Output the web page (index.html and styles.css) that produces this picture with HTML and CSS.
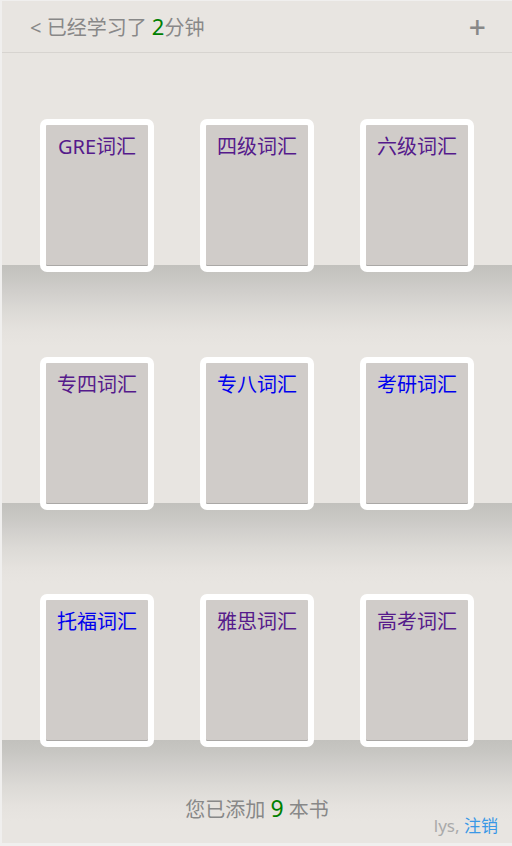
FILE: index.html
```html
<!DOCTYPE html>
<html lang="zh-CN">
<head>
<meta charset="utf-8">
<title>书架</title>
<link rel="stylesheet" href="styles.css">
</head>
<body>
<div class="app">
  <header class="topbar">
    <div class="study">&lt; 已经学习了 <span class="num">2</span>分钟</div>
    <div class="plus">+</div>
  </header>
  <main class="shelves">
    <section class="shelf first">
      <a class="book visited">GRE词汇</a>
      <a class="book visited">四级词汇</a>
      <a class="book visited">六级词汇</a>
    </section>
    <section class="shelf">
      <a class="book visited">专四词汇</a>
      <a class="book">专八词汇</a>
      <a class="book">考研词汇</a>
    </section>
    <section class="shelf">
      <a class="book">托福词汇</a>
      <a class="book visited">雅思词汇</a>
      <a class="book visited">高考词汇</a>
    </section>
  </main>
  <footer class="footer">
    <div class="count">您已添加 <span class="num big">9</span> 本书</div>
    <div class="user">lys, <a class="logout">注销</a></div>
  </footer>
</div>
</body>
</html>
```
FILE: styles.css
```css
html, body {
  margin: 0;
  padding: 0;
  background: #f0efee;
}
body {
  font-family: "Noto Sans", "Noto Sans CJK SC", sans-serif;
}
.app {
  margin: 1px 0 0 2px;
  width: 510px;
  height: 842px;
  background: #e8e5e1;
  display: flex;
  flex-direction: column;
  overflow: hidden;
}
.topbar {
  height: 51px;
  border-bottom: 1px solid #d7d4d0;
  display: flex;
  align-items: center;
  justify-content: space-between;
  padding: 0 26px 0 28px;
  color: #888;
  font-size: 20px;
}
.study { line-height: 1; }
.num {
  color: #008000;
  font-size: 22px;
}
.plus {
  font-size: 30px;
  font-weight: 500;
  color: #888;
  line-height: 1;
}
.shelves {
  display: flex;
  flex-direction: column;
}
.shelf {
  height: 237.5px;
  box-sizing: border-box;
  padding: 66px 16px 0 15px;
  display: grid;
  grid-template-columns: repeat(3, 160px);
  justify-items: center;
  align-items: start;
  background: linear-gradient(to bottom,
    #d0cecb 0, #dcdad6 20px, #e5e2de 40px, #e8e5e1 55px, #e8e5e1 212px,
    #c2c1bd 212px, #c8c7c3 225px, #d0cecb 237.5px);
}
.shelf.first {
  background: linear-gradient(to bottom,
    #e8e5e1 0, #e8e5e1 212px,
    #c2c1bd 212px, #c8c7c3 225px, #d0cecb 237.5px);
}
.book {
  width: 114px;
  height: 153px;
  box-sizing: border-box;
  border: 6px solid #fff;
  border-radius: 7px;
  background: #d0ccc9;
  box-shadow: inset 0 -1px 0 #aaa8a6;
  text-align: center;
  padding-top: 7px;
  font-size: 20px;
  line-height: 30px;
  color: #0000ee;
  text-decoration: none;
}
.book.visited { color: #551a8b; }
.footer {
  flex: 1;
  position: relative;
  background: linear-gradient(to bottom,
    #d0cecb 0, #dcdad6 20px, #e5e2de 40px, #e8e5e1 55px);
}
.count {
  text-align: center;
  color: #888;
  font-size: 20px;
  padding-top: 27px;
  line-height: 30px;
}
.num.big { font-size: 23px; }
.user {
  position: absolute;
  right: 14px;
  bottom: 6px;
  font-size: 17px;
  color: #aaa;
}
.logout { color: #3a98e6; }
```
